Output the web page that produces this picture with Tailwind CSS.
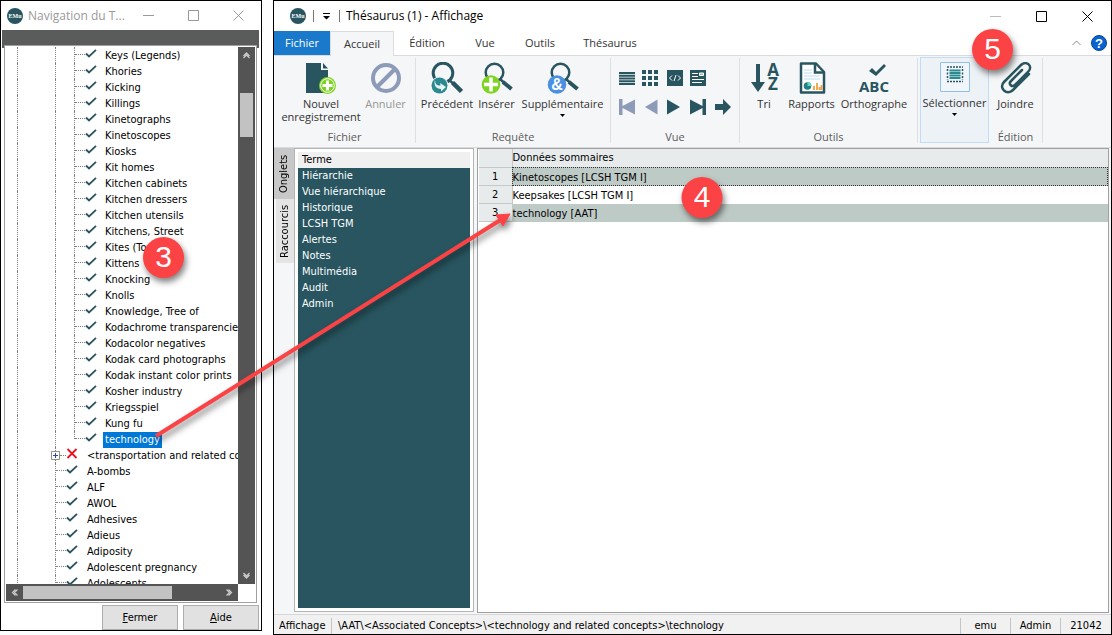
<!DOCTYPE html>
<html lang="fr">
  <head>
    <meta charset="UTF-8" />
    <meta name="viewport" content="width=device-width, initial-scale=1.0" />
    <title>Thésaurus (1) - Affichage</title>
    <script src="https://cdn.jsdelivr.net/npm/@tailwindcss/browser@4"></script>
  </head>
  <body class="relative flex h-screen gap-[11px] overflow-hidden bg-white font-['DejaVu_Sans_Condensed','DejaVu_Sans',sans-serif] text-[11px] leading-4 text-black">
    <!-- Navigation window -->
    <section class="mb-1 flex w-[262px] shrink-0 flex-col border border-black bg-white">
      <header class="flex h-[29px] shrink-0 items-center pl-1.5 font-['Open_Sans',sans-serif] text-xs text-[#999]">
        <svg class="size-4 shrink-0" viewBox="0 0 16 16">
          <circle cx="8" cy="8" r="8" fill="#28555f" />
          <text x="8" y="10" font-family="Liberation Serif, serif" font-weight="bold" font-size="6" fill="#fff" text-anchor="middle">EMu</text>
        </svg>
        <h2 class="ml-[5px] w-[98px] whitespace-nowrap">Navigation du T...</h2>
        <div class="flex flex-1 justify-around">
          <button aria-label="Réduire"><svg class="size-[11px]" viewBox="0 0 11 11" stroke="#999" fill="none"><path d="M0 5.500h11" /></svg></button>
          <button aria-label="Agrandir"><svg class="size-[11px]" viewBox="0 0 11 11" stroke="#999" fill="none"><path d="M.5.5h10v10H.5z" /></svg></button>
          <button aria-label="Fermer la fenêtre"><svg class="size-[11px]" viewBox="0 0 11 11" stroke="#999" fill="none"><path d="M.5.5l10 10M10.500.5l-10 10" /></svg></button>
        </div>
      </header>

      <div class="mr-0.5 ml-px h-[15px] shrink-0 bg-[#5a5c5b]"></div>
      <div class="mr-0.5 ml-px flex min-h-0 flex-1 flex-col bg-linear-to-b from-[#5a5c5b] from-[3px] to-white to-[3px] px-0.5">
        <div class="flex min-h-0 flex-1 flex-col border border-[#a0a0a0] bg-white p-px">
          <div class="flex min-h-0 flex-1">
            <ul id="tree" class="min-w-0 flex-1 overflow-hidden"></ul>
            <!-- Vertical scrollbar -->
            <div class="flex w-[17px] shrink-0 flex-col items-center bg-[#545454]">
              <svg class="h-[46px] w-[7px] shrink-0" viewBox="0 0 7 46" fill="none" stroke="#c8c8c8" stroke-width="1.300"><path d="M.5 9l3-3 3 3M.5 11l3-3 3 3" /></svg>
              <div class="h-11 w-[13px] bg-[#c2c2c2]"></div>
              <div class="flex-1"></div>
              <svg class="h-[17px] w-[7px] shrink-0" viewBox="0 0 7 17" fill="none" stroke="#c8c8c8" stroke-width="1.300"><path d="M.5 6l3 3 3-3M.5 8l3 3 3-3" /></svg>
            </div>
          </div>
          <!-- Horizontal scrollbar -->
          <div class="mr-[17px] flex h-[17px] shrink-0 items-center bg-[#545454]">
            <svg class="h-[7px] w-[17px]" viewBox="0 0 17 7" fill="none" stroke="#c8c8c8" stroke-width="1.300"><path d="M9.500.5l-3 3 3 3M11.500.5l-3 3 3 3" /></svg>
            <div class="h-[13px] w-[149px] bg-[#c2c2c2]"></div>
            <div class="flex-1"></div>
            <svg class="h-[7px] w-[17px]" viewBox="0 0 17 7" fill="none" stroke="#c8c8c8" stroke-width="1.300"><path d="M5.500.5l3 3-3 3M7.500.5l3 3-3 3" /></svg>
          </div>
        </div>
      </div>

      <div class="mt-0.5 flex shrink-0 justify-end gap-[5px] pr-0.5">
        <button class="h-[25px] w-[76px] border border-[#adadad] bg-[#e1e1e1]"><u>F</u>ermer</button>
        <button class="h-[25px] w-[76px] border border-[#adadad] bg-[#e1e1e1]"><u>A</u>ide</button>
      </div>
    </section>

    <!-- Main window -->
    <main class="flex min-w-0 flex-1 flex-col border border-black bg-[#f5f6f7]">
      <header class="flex h-[30px] shrink-0 items-center bg-white pr-[18px] pl-4 font-['Open_Sans',sans-serif] text-xs">
        <svg class="size-4" viewBox="0 0 16 16">
          <circle cx="8" cy="8" r="8" fill="#28555f" />
          <text x="8" y="10" font-family="Liberation Serif, serif" font-weight="bold" font-size="6" fill="#fff" text-anchor="middle">EMu</text>
        </svg>
        <span class="ml-[7px] h-3 w-px bg-[#777]"></span>
        <button class="mx-[9px]" aria-label="Personnaliser la barre"><svg class="h-2 w-[7px]" viewBox="0 0 7 8"><path d="M0 1h7v1H0zM0 4h7L3.500 7.500z" /></svg></button>
        <span class="h-3 w-px bg-[#777]"></span>
        <h1 class="ml-1.5 flex-1">Thésaurus (1) - Affichage</h1>
        <div class="flex gap-[35px]">
          <button aria-label="Réduire"><svg class="size-[11px]" viewBox="0 0 11 11" fill="none" stroke="#bbb"><path d="M0 5.500h11" /></svg></button>
          <button aria-label="Agrandir"><svg class="size-[11px]" viewBox="0 0 11 11" fill="none" stroke="#000"><path d="M.5.5h10v10H.5z" /></svg></button>
          <button aria-label="Fermer la fenêtre"><svg class="size-[11px]" viewBox="0 0 11 11" fill="none" stroke="#000"><path d="M.5.5l10 10M10.500.5l-10 10" /></svg></button>
        </div>
      </header>

      <!-- Ribbon tabs -->
      <nav class="flex h-6 shrink-0 bg-white font-['Open_Sans',sans-serif] text-[11px] text-[#333]">
        <button class="w-14 bg-[#1979ca] text-white">Fichier</button>
        <button class="z-10 -mb-px w-16 border border-b-0 border-[#dadbdc] bg-[#f5f6f7]">Accueil</button>
        <button class="w-[66px]">Édition</button>
        <button class="w-[50px]">Vue</button>
        <button class="w-[60px]">Outils</button>
        <button class="w-20">Thésaurus</button>
        <div class="flex flex-1 items-center justify-end gap-2.5 pr-1">
          <button aria-label="Réduire le ruban"><svg class="h-1.5 w-[9px]" viewBox="0 0 9 6" fill="none" stroke="#888"><path d="M.5 5l4-4 4 4" /></svg></button>
          <button aria-label="Aide en ligne">
            <svg class="size-4" viewBox="0 0 16 16">
              <circle cx="8" cy="8" r="7.500" fill="#0b63ce" stroke="#07459a" />
              <text x="8" y="12.500" font-family="Liberation Sans, sans-serif" font-weight="bold" font-size="13" fill="#fff" text-anchor="middle">?</text>
            </svg>
          </button>
        </div>
      </nav>

      <!-- Ribbon -->
      <div class="flex h-[93px] shrink-0 border-y border-[#dadbdc] font-['Open_Sans',sans-serif] text-[11px] leading-[13px] text-[#333]">
        <section class="mt-0.5 mb-1 flex w-[142px] flex-col border-r border-[#dfe0e1]">
          <div class="flex flex-1 pt-1">
            <button class="flex w-[94px] flex-col items-center">
              <svg class="mb-[3px] size-8 shrink-0" viewBox="0 0 32 32">
                <path d="M1 1h15v7h7v23H1z" fill="#28555f" />
                <path d="M18 1l5 5.500h-5z" fill="#28555f" />
                <circle cx="22.500" cy="23.500" r="8.500" fill="#7ed321" />
                <circle cx="22.500" cy="23.500" r="6.800" fill="none" stroke="#fff" stroke-width="1" />
                <path d="M22.500 18.500v10M17.500 23.500h10" stroke="#fff" stroke-width="3" />
              </svg>
              Nouvel<br />enregistrement
            </button>
            <button class="flex w-[35px] flex-col items-center text-[#969696]" disabled>
              <svg class="mb-[3px] size-8 shrink-0" viewBox="0 0 32 32" fill="none" stroke="#8d9bb9" stroke-width="4"><circle cx="16" cy="16" r="13" /><path d="M25.500 6.500l-19 19" /></svg>
              Annuler
            </button>
          </div>
          <h3 class="text-center text-[#5c5c5c]">Fichier</h3>
        </section>

        <section class="mt-0.5 mb-1 flex w-[195px] flex-col border-r border-[#dfe0e1]">
          <div class="flex flex-1 pt-1">
            <button class="flex w-[62px] flex-col items-center">
              <svg class="mb-[3px] size-8 shrink-0" viewBox="0 0 32 32">
                <circle cx="12" cy="11" r="9.800" fill="none" stroke="#28555f" stroke-width="3" />
                <path d="M18 18l5 4" stroke="#28555f" stroke-width="2.500" />
                <path d="M21.500 20.500l9 9" stroke="#28555f" stroke-width="4.500" />
                <circle cx="8.500" cy="23.500" r="9" fill="#f5f6f7" /><circle cx="8.500" cy="23.500" r="8" fill="#2b8a90" />
                <path d="M4 18c0 4 2 6 5.500 5.500l-.5-2.500 6 4-5 4.500v-2.500c-5 0-7.500-4-6-9z" fill="#e8f4f4" />
              </svg>
              Précédent
            </button>
            <button class="flex w-[37px] flex-col items-center">
              <svg class="mb-[3px] size-8 shrink-0" viewBox="0 0 32 32">
                <circle cx="13.500" cy="10.500" r="8.800" fill="none" stroke="#28555f" stroke-width="2.500" />
                <path d="M19 17l5 4.500" stroke="#28555f" stroke-width="2.500" />
                <path d="M22 20l8.500 7" stroke="#28555f" stroke-width="4" />
                <circle cx="10" cy="22.500" r="9.300" fill="#7ed321" />
                <path d="M10 15.500v14M3 22.500h14" stroke="#fff" stroke-width="3.500" />
              </svg>
              Insérer
            </button>
            <button class="flex flex-1 flex-col items-center">
              <svg class="mb-[3px] size-8 shrink-0" viewBox="0 0 32 32">
                <circle cx="13.500" cy="10.500" r="8.800" fill="none" stroke="#28555f" stroke-width="2.500" />
                <path d="M19 17l5 4.500" stroke="#28555f" stroke-width="2.500" />
                <path d="M22 20l8.500 7" stroke="#28555f" stroke-width="4" />
                <circle cx="10" cy="22.500" r="9.300" fill="#4a90e2" />
                <text x="10" y="28" font-family="Liberation Sans, sans-serif" font-weight="bold" font-size="16" fill="#fff" text-anchor="middle">&amp;</text>
              </svg>
              Supplémentaire
              <svg class="mt-1 h-[3px] w-[5px]" viewBox="0 0 5 3"><path d="M0 0h5L2.500 3z" /></svg>
            </button>
          </div>
          <h3 class="text-center text-[#5c5c5c]">Requête</h3>
        </section>

        <section class="mt-0.5 mb-1 flex w-[129px] flex-col border-r border-[#dfe0e1]">
          <div class="flex flex-1 flex-col gap-[13px] pt-3 pl-2">
            <div class="flex gap-[7px]">
              <button aria-label="Liste"><svg class="size-4" viewBox="0 0 16 16" stroke="#28555f" stroke-width="1.900"><path d="M0 3h16M0 5.700h16M0 8.500h16M0 11.300h16M0 14h16" /></svg></button>
              <button aria-label="Grille"><svg class="size-4" viewBox="0 0 16 16" stroke="#28555f" stroke-width="4" stroke-dasharray="4 2"><path d="M0 2h16M0 8h16M0 14h16" /></svg></button>
              <button class="ml-0.5" aria-label="Code">
                <svg class="size-4" viewBox="0 0 16 16"><path d="M0 0h16v16H0z" fill="#28555f" /><path d="M5 5.500L2.500 8 5 10.500M11 5.500L13.500 8 11 10.500M9 5L7 11" stroke="#fff" fill="none" /></svg>
              </button>
              <button aria-label="Page"><svg class="size-4" viewBox="0 0 16 16"><path d="M0 0h16v16H0z" fill="#28555f" /><path d="M2 3.500h6M2 6.500h6M2 9.500h12M2 12.500h10" stroke="#fff" /><path d="M9.500 3h4v2.500h-4z" stroke="#fff" fill="#9bb" /></svg></button>
            </div>
            <div class="flex gap-[7px]">
              <button aria-label="Premier"><svg class="size-4" viewBox="0 0 16 16" fill="#8d9bb9"><path d="M0 0h3.500v7L16 .5v15L3.500 9v7H0z" /></svg></button>
              <button aria-label="Reculer"><svg class="size-4" viewBox="0 0 16 16" fill="#8d9bb9"><path d="M15.500.5v15L3 8z" /></svg></button>
              <button class="ml-0.5" aria-label="Avancer"><svg class="size-4" viewBox="0 0 16 16" fill="#28555f"><path d="M0 .5v15L13 8z" /></svg></button>
              <button aria-label="Dernier"><svg class="size-4" viewBox="0 0 16 16" fill="#28555f"><path d="M16 0h-3.500v7L0 .5v15L12.500 9v7H16z" /></svg></button>
              <button class="ml-0.5" aria-label="Aller à"><svg class="size-4" viewBox="0 0 16 16" fill="#28555f"><path d="M0 5h8V0l8 8-8 8v-5H0z" /></svg></button>
            </div>
          </div>
          <h3 class="text-center text-[#5c5c5c]">Vue</h3>
        </section>

        <section class="mt-0.5 mb-1 flex w-[178px] flex-col border-r border-[#dfe0e1]">
          <div class="flex flex-1 pt-1">
            <button class="flex w-[48px] flex-col items-center">
              <svg class="mb-[3px] size-8 shrink-0" viewBox="0 0 32 32" fill="#28555f">
                <path d="M8 2h4v18h5L10 30 3 20h5z" />
                <text x="25" y="14" font-family="Open Sans, sans-serif" font-weight="bold" font-size="17" text-anchor="middle">A</text>
                <text x="25" y="28" font-family="Open Sans, sans-serif" font-weight="bold" font-size="17" text-anchor="middle">Z</text>
              </svg>
              Tri
            </button>
            <button class="flex w-[47px] flex-col items-center">
              <svg class="mb-[3px] size-8 shrink-0" viewBox="0 0 32 32">
                <path d="M5 1.500h15L28 10v20.500H5z" fill="#fff" stroke="#28555f" stroke-width="2.500" stroke-linejoin="round" />
                <path d="M19 1.500v9h9" fill="none" stroke="#28555f" stroke-width="2.500" />
                <path d="M8 8h8M8 11h8M8 14h16M8 17h16" stroke="#b9dcf2" />
                <circle cx="11.500" cy="24" r="3.800" fill="#21827f" /><path d="M11.500 24v-4a4 4 0 0 1 4 4z" fill="#65d3c8" />
                <path d="M18 28v-4M21 28v-7M23.500 28v-3M25.500 28v-5" stroke="#f0a040" stroke-width="1.800" />
              </svg>
              Rapports
            </button>
            <button class="flex w-[78px] flex-col items-center">
              <svg class="mb-[3px] size-8 shrink-0" viewBox="0 0 32 32" fill="#28555f">
                <path d="M11 9l3-3 4 4 8-8 2 2-10 10z" />
                <text x="16" y="30" font-family="Open Sans, sans-serif" font-weight="bold" font-size="15" text-anchor="middle">ABC</text>
              </svg>
              Orthographe
            </button>
          </div>
          <h3 class="text-center text-[#5c5c5c]">Outils</h3>
        </section>

        <section class="mt-0.5 mb-1 flex w-[125px] border-r border-[#dfe0e1] pl-0.5">
          <button class="-mt-px flex w-[69px] flex-col items-center border border-[#c2dcf5] bg-[#edf2f7] pt-1">
            <svg class="mb-1 h-[30px] w-[30px] shrink-0" viewBox="0 0 30 30">
              <path d="M.5.5h29v29H.5z" fill="#f0f6fc" stroke="#92c0ee" />
              <path d="M7 5h16M7 19.500h16" stroke="#28555f" stroke-width="1.500" stroke-dasharray="2 1" />
              <path d="M7.500 7v11M22.500 7v11" stroke="#28555f" stroke-width="1.500" stroke-dasharray="2 1.500" />
              <path d="M9.500 8.500h11M9.500 11h11M9.500 13.500h11M9.500 16h11" stroke="#2b8a90" stroke-width="1.800" />
            </svg>
            Sélectionner
            <svg class="mt-1 h-[3px] w-[5px]" viewBox="0 0 5 3"><path d="M0 0h5L2.500 3z" /></svg>
          </button>
          <div class="flex flex-1 flex-col">
            <button class="flex flex-1 flex-col items-center pt-1">
              <svg class="mb-[3px] size-8 shrink-0" viewBox="0 0 32 32" fill="none" stroke="#28555f" stroke-width="2.500" stroke-linecap="round"><path d="M22 8L11 19c-3 3 1 7 4 4L28 10c6-6-2-12-7-7L4 20c-6 6 3 14 9 8L29 12" /></svg>
              Joindre
            </button>
            <h3 class="text-center text-[#5c5c5c]">Édition</h3>
          </div>
        </section>
      </div>

      <!-- Workspace -->
      <div class="flex min-h-0 flex-1">
        <div class="flex w-5 shrink-0 flex-col items-end">
          <button class="flex h-[51px] w-5 rotate-180 items-center justify-center bg-[#c8c8c8] [writing-mode:vertical-rl]">Onglets</button>
          <button class="flex h-16 w-[18px] rotate-180 items-center justify-center bg-[#e4e4e4] [writing-mode:vertical-rl]">Raccourcis</button>
        </div>
        <nav class="mb-px flex w-[180px] shrink-0 flex-col border border-[#b4b4b4] bg-white p-[3px]">
          <ul id="tabs" class="flex-1 bg-[#28555f] text-white"></ul>
        </nav>
        <div class="mr-0.5 ml-[3px] min-w-0 flex-1 border border-[#a0a0a0] bg-white pl-px">
          <table class="w-full table-fixed border-collapse text-left">
            <colgroup><col class="w-[33px]" /><col /></colgroup>
            <thead>
              <tr class="h-[18px] bg-[#e8ebec]">
                <th class="border-r border-b border-[#c4c8c9]"></th>
                <th class="border-b border-[#c4c8c9] p-0 pt-px font-normal">Données sommaires</th>
              </tr>
            </thead>
            <tbody>
              <tr class="h-[18px] bg-[#becac6]">
                <th class="border-r border-b border-[#c4c8c9] bg-[#e8ebec] p-0 pt-px text-center font-normal">1</th>
                <td class="p-0 pt-0.5 outline -outline-offset-1 outline-dotted outline-[#333]">Kinetoscopes [LCSH TGM I]</td>
              </tr>
              <tr class="h-[18px]">
                <th class="border-r border-b border-[#c4c8c9] bg-[#e8ebec] p-0 pt-px text-center font-normal">2</th>
                <td class="p-0 pt-0.5">Keepsakes [LCSH TGM I]</td>
              </tr>
              <tr class="h-[18px] bg-[#becac6]">
                <th class="border-r border-b border-[#c4c8c9] bg-[#e8ebec] p-0 pt-px text-center font-normal">3</th>
                <td class="p-0 pt-0.5">technology [AAT]</td>
              </tr>
            </tbody>
          </table>
        </div>
      </div>

      <!-- Status bar -->
      <footer class="mt-px flex h-5 shrink-0 items-center border-t border-[#d7d7d7] bg-[#f1f1f1] pt-0.5">
        <span class="w-[58px] border-r border-[#c4c4c4] pl-[5px]">Affichage</span>
        <span class="flex-1 truncate pl-1.5">\AAT\&lt;Associated Concepts&gt;\&lt;technology and related concepts&gt;\technology</span>
        <span class="w-[51px] border-x border-[#c4c4c4] text-center">emu</span>
        <span class="w-[50px] border-r border-[#c4c4c4] text-center">Admin</span>
        <span class="w-[50px] text-center">21042</span>
      </footer>
    </main>

    <!-- Step markers and arrow -->
    <svg class="pointer-events-none absolute top-0 left-0 h-[635px] w-[1112px] drop-shadow-[2px_4px_3px_rgba(0,0,0,0.5)]" viewBox="0 0 1112 635">
      <path d="M156 436L502 219" stroke="#fb4345" stroke-width="4" />
      <path d="M510 214l-7 12-7-11z" fill="#fb4345" stroke="#fb4345" stroke-width="1" />
      <g fill="#fb4345"><circle cx="163.500" cy="257.500" r="20.500" /><circle cx="702" cy="197.500" r="20.500" /><circle cx="992.500" cy="49.500" r="20.500" /></g>
    </svg>
    <svg class="pointer-events-none absolute top-0 left-0 h-[635px] w-[1112px]" viewBox="0 0 1112 635" font-family="Liberation Sans, sans-serif" font-size="30" fill="#fff" text-anchor="middle">
      <text x="163.500" y="267">3</text>
      <text x="702" y="207">4</text>
      <text x="992.500" y="59">5</text>
    </svg>

    <script>
      const concepts = [
        "Keys (Legends)", "Khories", "Kicking", "Killings", "Kinetographs", "Kinetoscopes", "Kiosks",
        "Kit homes", "Kitchen cabinets", "Kitchen dressers", "Kitchen utensils", "Kitchens, Street",
        "Kites (Toys)", "Kittens", "Knocking", "Knolls", "Knowledge, Tree of",
        "Kodachrome transparencies", "Kodacolor negatives", "Kodak card photographs",
        "Kodak instant color prints", "Kosher industry", "Kriegsspiel", "Kung fu", "technology",
      ];
      const siblings = [
        "&lt;transportation and related concepts&gt;", "A-bombs", "ALF", "AWOL", "Adhesives",
        "Adieus", "Adiposity", "Adolescent pregnancy", "Adolescents",
      ];
      const tabs = [
        "Terme", "Hiérarchie", "Vue hiérarchique", "Historique", "LCSH TGM",
        "Alertes", "Notes", "Multimédia", "Audit", "Admin",
      ];

      const line = "border-l border-dotted border-[#808080] shrink-0";
      const dash = `<span class="mb-0.5 w-2.5 shrink-0 border-t border-dotted border-[#808080]"></span>`;
      const check = `<svg class="mb-1 h-[9px] w-3 shrink-0" viewBox="0 0 12 9" fill="none" stroke="#28555f" stroke-width="1.800"><path d="M1 4.500l3 3L11 .8" /></svg>`;
      const cross = `<svg class="mb-1 h-[11px] w-3 shrink-0" viewBox="0 0 12 11" fill="none" stroke="#e81123" stroke-width="1.800"><path d="M1.500 1l9 9M10.500 1l-9 9" /></svg>`;
      const plus = `<svg class="z-10 -ml-[5px] size-[9px] shrink-0" viewBox="0 0 9 9"><path d="M.5.5h8v8h-8z" fill="#fff" stroke="#919191" /><path d="M2 4.500h5M4.500 2v5" stroke="#2b4a9b" /></svg>`;

      // Niveau 3 de l'arbre
      const rows = concepts.map((name) => {
        const last = name === "technology";
        return `<li class="flex h-4 items-center whitespace-nowrap pl-[11px]">
          <span class="${line} h-4 w-[38px]"></span>
          <span class="${line} h-4 w-[19px]"></span>
          <span class="${line} ${last ? "h-2 self-start" : "h-4"} w-px"></span>
          ${dash}${check}
          <span class="mt-0.5 ${last ? "ml-[6px] bg-[#0078d7] px-0.5 text-white" : "ml-[8px]"}">${name}</span>
        </li>`;
      });

      // Niveau 2 de l'arbre
      siblings.forEach((name, i) => {
        rows.push(`<li class="flex h-4 items-center whitespace-nowrap pl-[11px]">
          <span class="${line} h-4 w-[38px]"></span>
          <span class="${line} h-4 w-px"></span>
          ${i === 0 ? plus + `<span class="w-1.5 shrink-0 border-t border-dotted border-[#808080]"></span>` + cross : dash + check}
          <span class="mt-0.5 ml-[9px]">${name}</span>
        </li>`);
      });
      document.getElementById("tree").innerHTML = rows.join("");

      document.getElementById("tabs").innerHTML = tabs
        .map((name, i) => `<li><button class="block h-4 w-full pl-1 text-left ${i === 0 ? "bg-[#f0f0f0] text-black" : ""}">${name}</button></li>`)
        .join("");
    </script>
  </body>
</html>
